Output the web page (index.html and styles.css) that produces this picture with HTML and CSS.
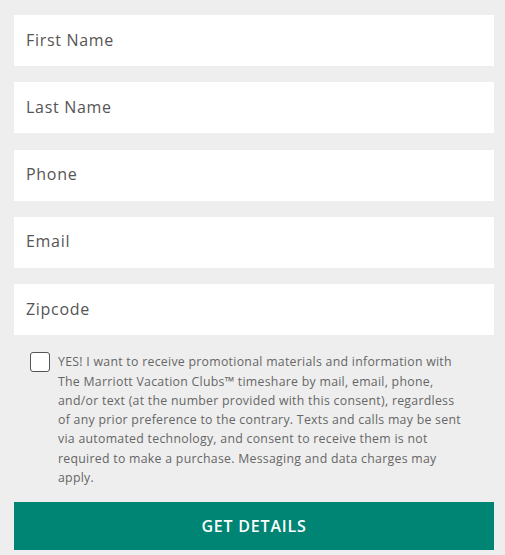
FILE: index.html
```
<!DOCTYPE html>
<html lang="en">
<head>
    <meta charset="UTF-8">
    <meta name="viewport" content="width=device-width, initial-scale=1.0">
    <title>Get Details</title>
    <link rel="stylesheet" href="styles.css">
</head>
<body>
    <form class="lead-form">
        <input type="text" class="field" placeholder="First Name">
        <input type="text" class="field" placeholder="Last Name">
        <input type="tel" class="field" placeholder="Phone">
        <input type="email" class="field" placeholder="Email">
        <input type="text" class="field" placeholder="Zipcode">

        <label class="consent">
            <input type="checkbox" class="consent-box">
            <span class="consent-text">YES! I want to receive promotional materials and information with The Marriott Vacation Clubs&trade; timeshare by mail, email, phone, and/or text (at the number provided with this consent), regardless of any prior preference to the contrary. Texts and calls may be sent via automated technology, and consent to receive them is not required to make a purchase. Messaging and data charges may apply.</span>
        </label>

        <button type="submit" class="submit-btn">GET DETAILS</button>
    </form>
</body>
</html>
```

FILE: styles.css
```
body {
    margin: 0;
    background: #eeeeee;
    font-family: 'Open Sans', sans-serif;
}

.lead-form {
    display: flex;
    flex-direction: column;
    gap: 16.25px;
    padding: 15px 11px 0 14px;
}

.field {
    height: 51px;
    padding: 0 12px 2px;
    border: none;
    background: white;
    font-family: inherit;
    font-size: 16px;
    letter-spacing: 0.7px;
    color: #555;
    box-sizing: border-box;
}

.field::placeholder {
    color: #555;
}

.consent {
    display: flex;
    align-items: flex-start;
    gap: 8px;
    padding: 0 30px 0 16px;
    margin-top: 1px;
}

.consent-box {
    appearance: none;
    flex: none;
    width: 20px;
    height: 20px;
    margin: 0;
    border: 1px solid #555;
    border-radius: 3px;
    background: white;
}

.consent-text {
    font-size: 12.3px;
    line-height: 19.3px;
    letter-spacing: 0.28px;
    color: #666;
}

.submit-btn {
    height: 48px;
    margin-top: -2px;
    border: none;
    background: #008575;
    color: white;
    font-family: inherit;
    font-size: 16px;
    font-weight: 600;
    letter-spacing: 0.8px;
}
```
